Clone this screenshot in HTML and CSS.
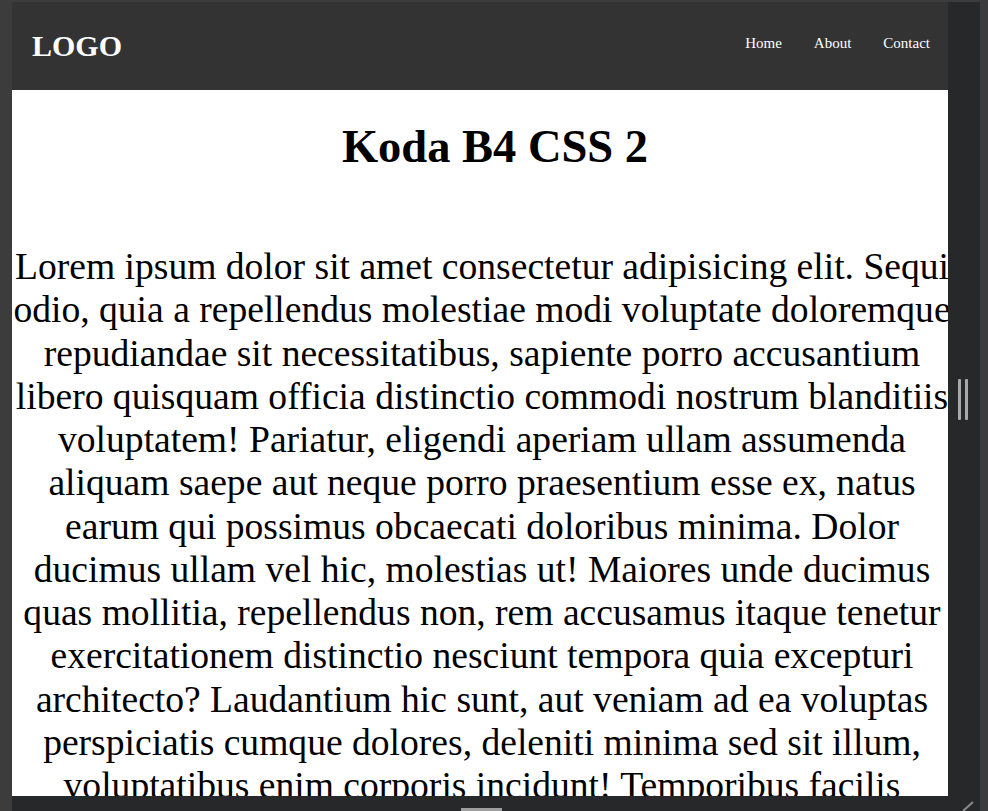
FILE: index.html
```html
<!DOCTYPE html>
<html lang="en">
<head>
<meta charset="utf-8">
<title>Koda B4 CSS 2</title>
<link rel="stylesheet" href="styles.css">
</head>
<body>
<div class="app">
  <div class="main-col">
    <div class="viewport">
      <header class="site-header">
        <div class="logo">LOGO</div>
        <nav class="nav">
          <a href="#">Home</a>
          <a href="#">About</a>
          <a href="#">Contact</a>
        </nav>
      </header>
      <main class="content">
        <h1 class="title">Koda B4 CSS 2</h1>
        <p class="text">Lorem ipsum dolor sit amet consectetur adipisicing elit. Sequi odio, quia a repellendus molestiae modi voluptate doloremque repudiandae sit necessitatibus, sapiente porro accusantium libero quisquam officia distinctio commodi nostrum blanditiis voluptatem! Pariatur, eligendi aperiam ullam assumenda aliquam saepe aut neque porro praesentium esse ex, natus earum qui possimus obcaecati doloribus minima. Dolor ducimus ullam vel hic, molestias ut! Maiores unde ducimus quas mollitia, repellendus non, rem accusamus itaque tenetur exercitationem distinctio nesciunt tempora quia excepturi architecto? Laudantium hic sunt, aut veniam ad ea voluptas perspiciatis cumque dolores, deleniti minima sed sit illum, voluptatibus enim corporis incidunt! Temporibus facilis reprehenderit, dolorum sequi eveniet.</p>
      </main>
    </div>
    <div class="hbar"><span class="hthumb"></span></div>
  </div>
  <div class="vbar">
    <div class="handle"><span></span><span></span></div>
    <svg class="grip" width="14" height="10" viewBox="0 0 14 10"><line x1="2" y1="10" x2="12" y2="1" stroke="#8a8a8a" stroke-width="2"/></svg>
  </div>
</div>
</body>
</html>
```

FILE: styles.css
```css
html, body {
  margin: 0;
  height: 811px;
  overflow: hidden;
}
body {
  background: #3c3c3c;
  padding: 2px 0 0 12px;
  box-sizing: border-box;
  font-family: "Liberation Serif", "Times New Roman", serif;
}
.app {
  display: flex;
  width: 968px;
  height: 809px;
  background: #27282a;
}
.main-col {
  width: 936px;
  display: flex;
  flex-direction: column;
}
.viewport {
  height: 794px;
  background: #ffffff;
  overflow: hidden;
}
.site-header {
  height: 88px;
  background: #333333;
  display: flex;
  justify-content: space-between;
  align-items: center;
  padding: 0 18px 0 20px;
  box-sizing: border-box;
}
.logo {
  color: #ffffff;
  font-size: 30px;
  font-weight: bold;
}
.nav {
  display: flex;
  gap: 32px;
  margin-bottom: 6px;
}
.nav a {
  color: #ffffff;
  text-decoration: none;
  font-size: 15px;
}
.content {
  text-align: center;
  color: #000000;
  width: 940px;
}
.title {
  font-size: 46.5px;
  font-weight: bold;
  margin: 30px 0 72px;
  padding-left: 26px;
}
.text {
  font-size: 37.6px;
  line-height: 43.25px;
  margin: 0;
}
.hbar {
  height: 15px;
  padding: 12px 0 0 449px;
  box-sizing: border-box;
}
.hthumb {
  display: block;
  width: 41px;
  height: 3px;
  background: #9e9e9e;
}
.vbar {
  width: 32px;
  display: flex;
  flex-direction: column;
}
.handle {
  display: flex;
  gap: 4px;
  margin: 377px 0 0 10px;
}
.handle span {
  width: 3px;
  height: 41px;
  background: #a8a8a8;
  border-radius: 1px;
}
.grip {
  margin: auto 0 0 13px;
  display: block;
}
```
